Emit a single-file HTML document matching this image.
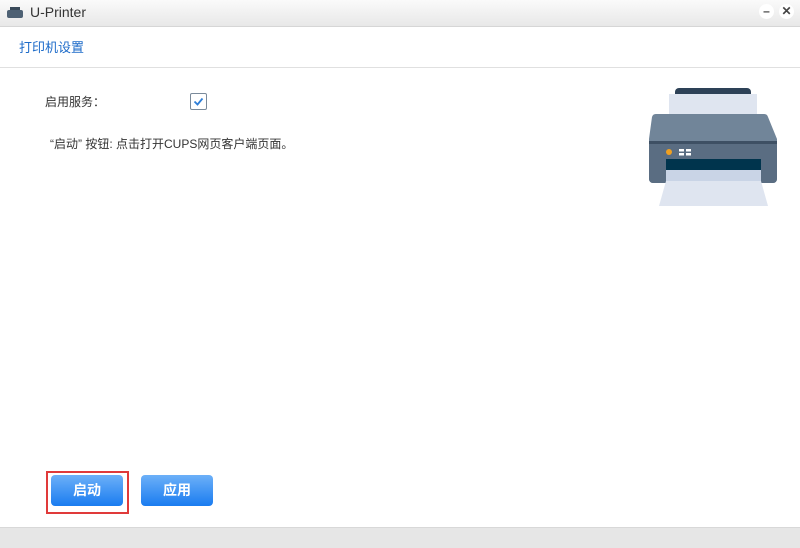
<!DOCTYPE html>
<html><head><meta charset="utf-8"><style>
body{margin:0;width:800px;height:547px;overflow:hidden;background:#fff;font-family:"Liberation Sans","Noto Sans CJK SC",sans-serif;position:relative}
.t{position:absolute;left:0;top:0;width:800px;height:26px;background:linear-gradient(#fafafa,#e8e8e8);border-bottom:1px solid #d6d6d6}
.t span{position:absolute;left:30px;top:4px;font-size:14px;color:#333}
.hd{position:absolute;left:19px;top:37px;font-size:13px;color:#1d6bc9}
.ln{position:absolute;left:0;top:67px;width:800px;height:1px;background:#e0e0e0}
.txt{position:absolute;font-size:12px;color:#333}
.cb{position:absolute;left:190px;top:93px;width:15px;height:15px;border:1px solid #7a8a9a;border-radius:2px;background:#fff}
.btn{position:absolute;top:475px;width:72px;height:31px;border-radius:4px;background:linear-gradient(#6cb0f8,#1a7cf0);color:#fff;font-size:14px;font-weight:bold;text-align:center;line-height:31px}
.ft{position:absolute;left:0;top:527px;width:800px;height:20px;background:#e6e6e6;border-top:1px solid #d8d8d8}
.cir{position:absolute;top:4px;width:15px;height:15px;border-radius:50%;background:#fff;font-size:12px;line-height:15px;text-align:center;color:#444;font-weight:bold}
</style></head><body>
<div class="t">
<svg style="position:absolute;left:7px;top:7px" width="16" height="12"><rect x="3" y="0" width="10" height="3" fill="#3a4a5a"/><rect x="0" y="3" width="16" height="8" rx="2" fill="#4d6073"/></svg>
<span>U-Printer</span>
<div class="cir" style="left:759px">–</div><div class="cir" style="left:779px">✕</div>
</div>
<div class="hd">打印机设置</div>
<div class="ln"></div>
<div class="txt" style="left:45px;top:93px">启用服务：</div>
<div class="cb"><svg width="15" height="15"><path d="M3.5 7.5l3 3 5-6" fill="none" stroke="#2f7fd8" stroke-width="1.8"/></svg></div>
<div class="txt" style="left:50px;top:135px">“启动” 按钮: 点击打开CUPS网页客户端页面。</div>
<svg style="position:absolute;left:640px;top:80px" width="150" height="130">
<rect x="35" y="8" width="76" height="10" rx="4" fill="#2d4157"/>
<rect x="29" y="14" width="88" height="20" fill="#dfe5f0"/>
<path d="M16 34h108a4 4 0 0 1 4 3l9 22v40a4 4 0 0 1-4 4H13a4 4 0 0 1-4-4V59l3-22a4 4 0 0 1 4-3z" fill="#718599"/>
<path d="M9 62h128v37a4 4 0 0 1-4 4H13a4 4 0 0 1-4-4z" fill="#5a6d82"/>
<rect x="9" y="61" width="128" height="3" fill="#3e5064"/>
<circle cx="29" cy="72" r="3" fill="#f0a020"/>
<rect x="39" y="69" width="5" height="2.5" fill="#fff"/><rect x="46" y="69" width="5" height="2.5" fill="#fff"/>
<rect x="39" y="73" width="5" height="2.5" fill="#fff"/><rect x="46" y="73" width="5" height="2.5" fill="#fff"/>
<rect x="26" y="79" width="95" height="11" fill="#00344d"/>
<path d="M26 90h95v11l7 25H19l7-25z" fill="#dfe5f0"/>
<rect x="26" y="90" width="95" height="11" fill="#c9d4e6"/>
</svg>
<div style="position:absolute;left:46px;top:471px;width:79px;height:39px;border:2px solid #e03a3a"></div>
<div class="btn" style="left:51px">启动</div>
<div class="btn" style="left:141px">应用</div>
<div class="ft"></div>
</body></html>
